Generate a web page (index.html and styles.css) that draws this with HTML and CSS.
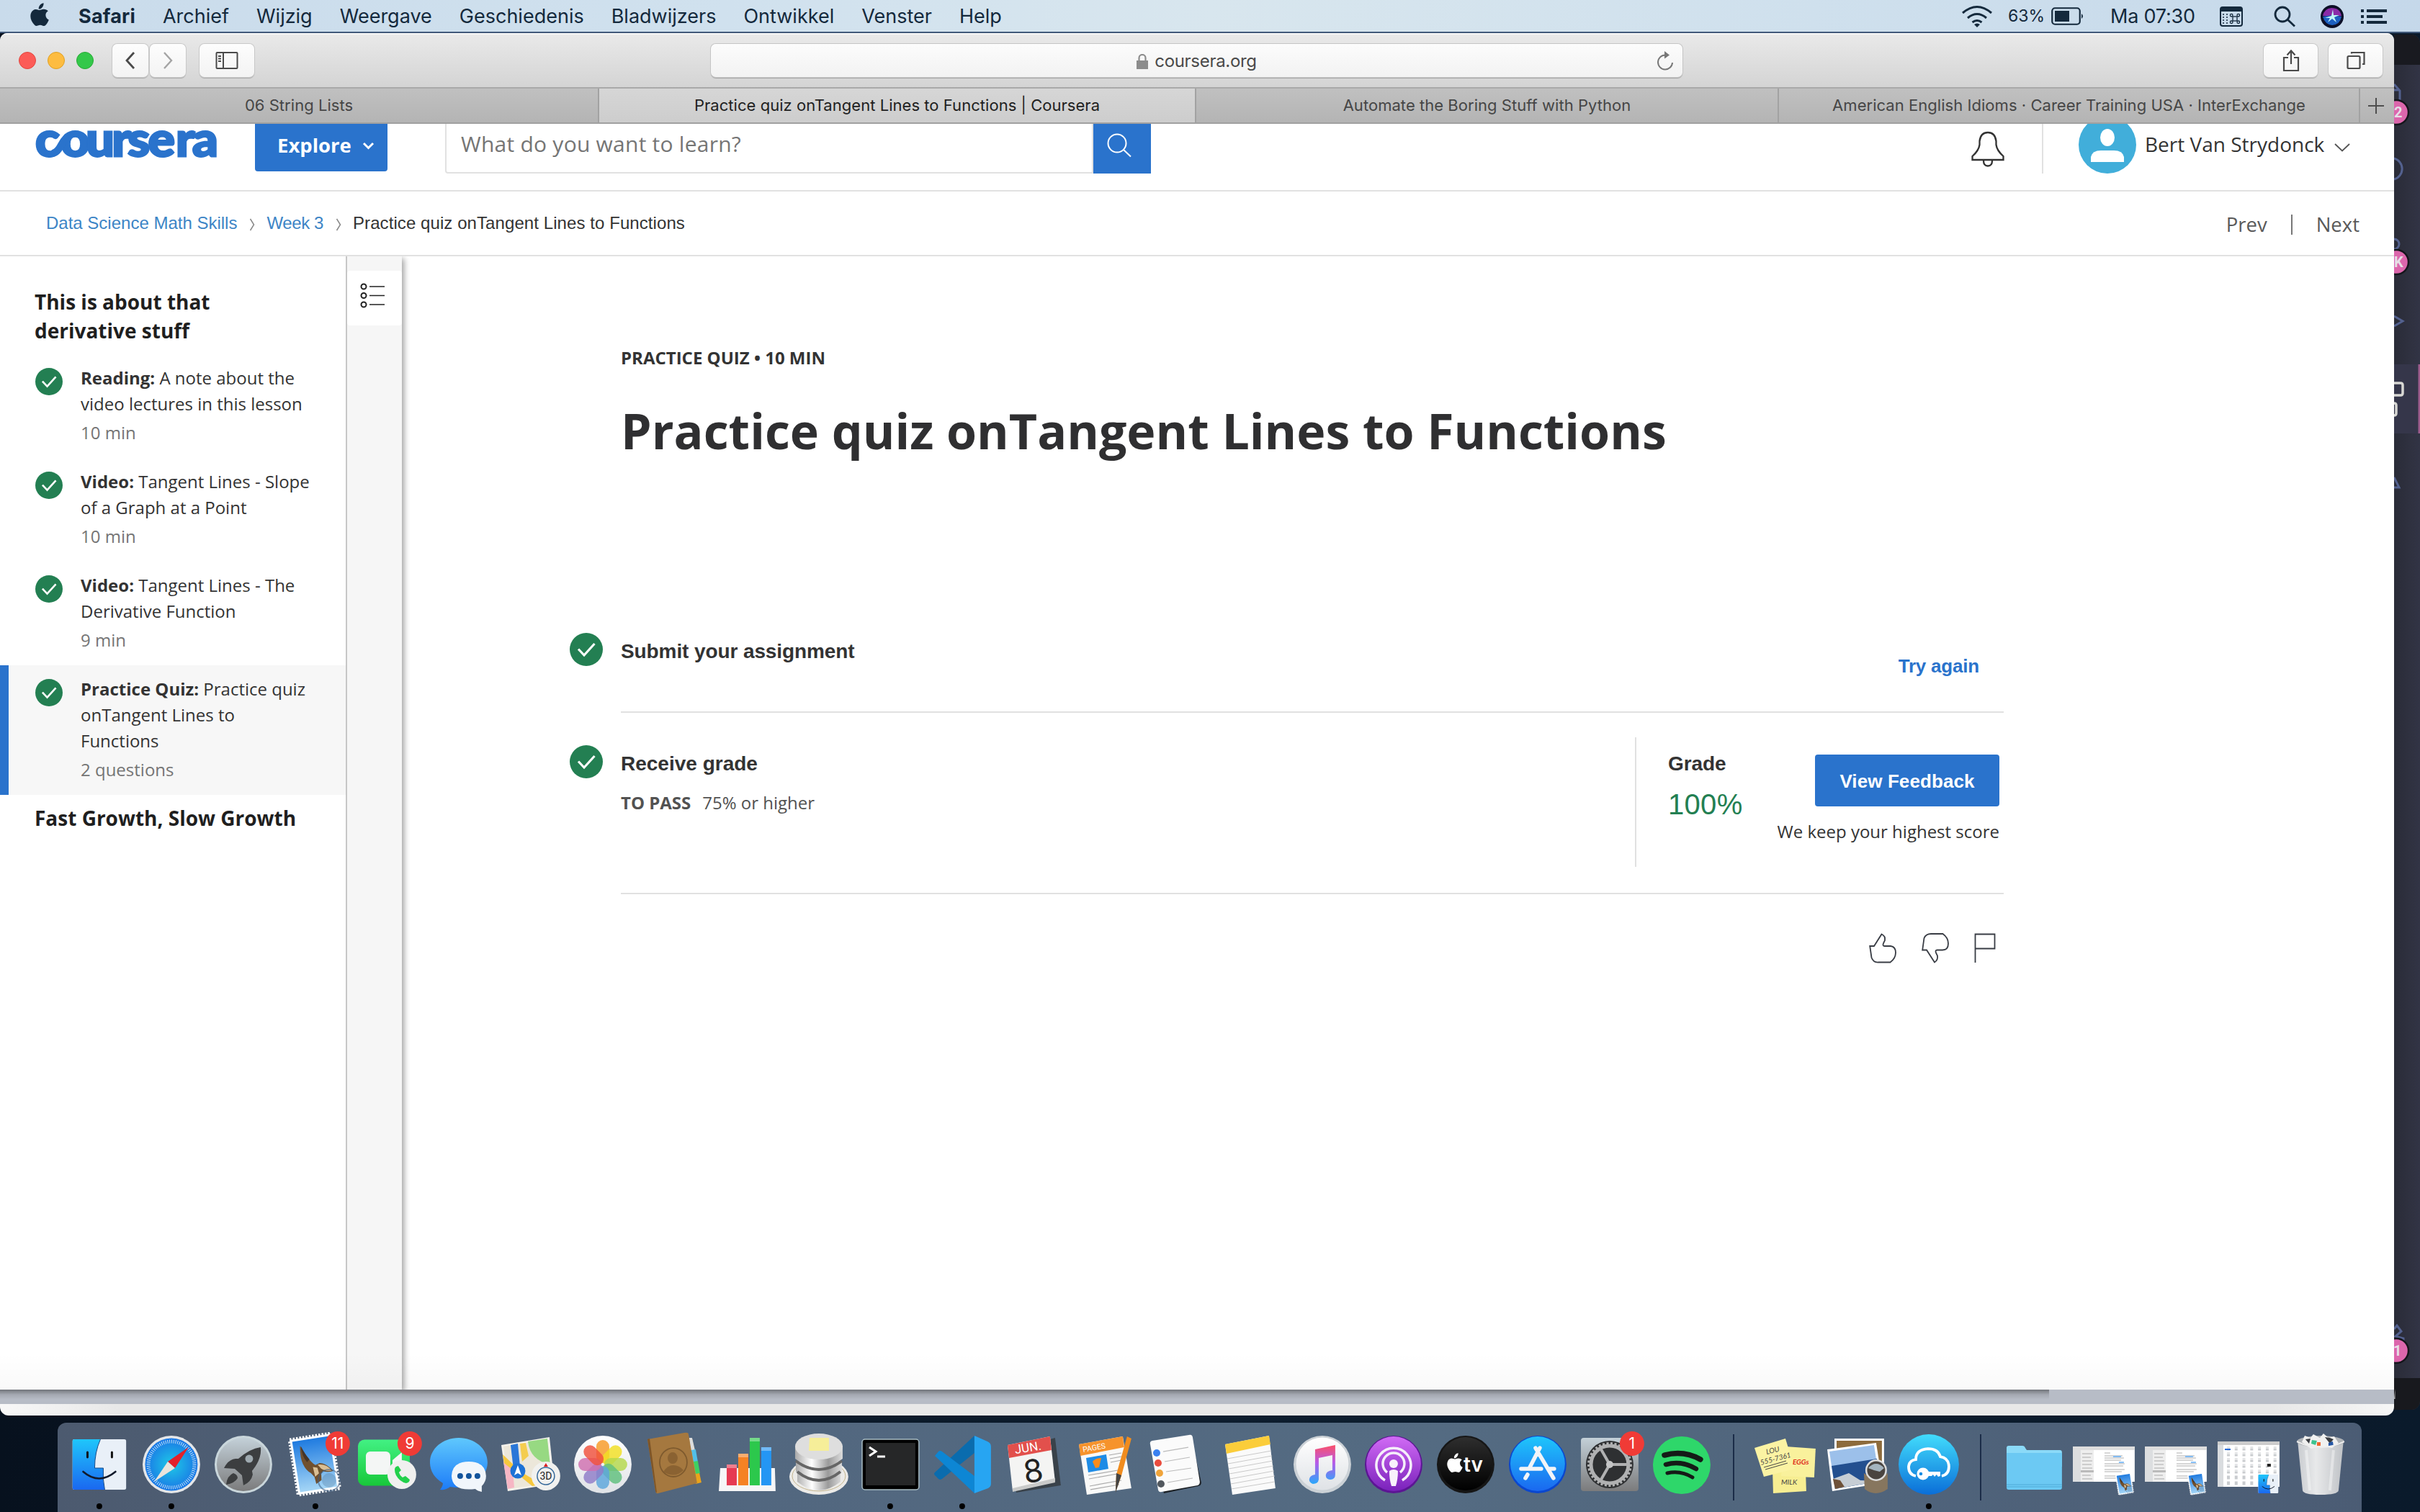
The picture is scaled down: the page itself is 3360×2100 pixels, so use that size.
FILE: index.html
```html
<!DOCTYPE html>
<html lang="nl">
<head>
<meta charset="utf-8">
<title>Practice quiz onTangent Lines to Functions | Coursera</title>
<link rel="stylesheet" href="styles.css">
</head>
<body>
<svg class="defs" aria-hidden="true">
  <defs>
    <symbol id="check" viewBox="0 0 46 46"><circle cx="23" cy="23" r="23" fill="#237f52"/><path d="M12 22.500l8 8.500L34.500 15" fill="none" stroke="#fff" stroke-width="3.200"/></symbol>
    <symbol id="apple" viewBox="0 0 26 32"><path d="M18.500.3c.3 2.500-.8 4.600-2.100 6.100-1.300 1.500-3.100 2.300-4.700 2.200-.3-2.400.9-4.500 2.100-5.900C15 1.300 17 .4 18.500.3zM24.800 11.300c-2.500 1.600-3.500 3.600-3.400 6 .1 2.900 1.800 5.200 4.400 6.200-1 2.900-2.500 5.300-4.300 7.300-1.500 1.600-3 1.300-4.700.6-2.100-.9-4-.9-6.200.1-1.700.7-3.200.7-4.600-.8C.6 25.200-1.200 18 1.600 12.900c1.300-2.400 3.500-3.900 5.900-4 2-.1 3.900 1.200 5.400 1.200 1.300 0 3.400-1.500 6-1.300 2.300.1 4.500 1 5.900 2.500z"/></symbol>
    <symbol id="chev" viewBox="0 0 8 20"><path d="M1.500 2l5 8-5 8" fill="none" stroke="#888" stroke-width="1.500"/></symbol>
    <linearGradient id="gBlue" x1="0" y1="0" x2="0" y2="1"><stop offset="0" stop-color="#1fc6fb"/><stop offset="1" stop-color="#1a68f0"/></linearGradient>
    <linearGradient id="gMsg" x1="0" y1="0" x2="0" y2="1"><stop offset="0" stop-color="#5fc8fd"/><stop offset="1" stop-color="#1d7cf8"/></linearGradient>
    <linearGradient id="gGreen" x1="0" y1="0" x2="0" y2="1"><stop offset="0" stop-color="#42f183"/><stop offset="1" stop-color="#18c83a"/></linearGradient>
    <linearGradient id="gSilver" x1="0" y1="0" x2="0" y2="1"><stop offset="0" stop-color="#c3d0d8"/><stop offset="1" stop-color="#7b7b7c"/></linearGradient>
    <linearGradient id="gWhite" x1="0" y1="0" x2="0" y2="1"><stop offset="0" stop-color="#fff"/><stop offset="1" stop-color="#dfe2e6"/></linearGradient>
    <linearGradient id="gPurple" x1="0" y1="0" x2="0" y2="1"><stop offset="0" stop-color="#d16bf5"/><stop offset="1" stop-color="#7a22bb"/></linearGradient>
    <linearGradient id="gNote" x1="0" y1="0" x2="0" y2="1"><stop offset="0" stop-color="#fb4f68"/><stop offset=".45" stop-color="#b75ae8"/><stop offset="1" stop-color="#28a8fb"/></linearGradient>
    <linearGradient id="gBlack" x1="0" y1="0" x2="0" y2="1"><stop offset="0" stop-color="#2e2e2e"/><stop offset="1" stop-color="#000"/></linearGradient>
    <linearGradient id="gKey" x1="0" y1="0" x2="0" y2="1"><stop offset="0" stop-color="#42dcfc"/><stop offset="1" stop-color="#0a6ed8"/></linearGradient>
    <linearGradient id="gSky" x1="0" y1="0" x2="0" y2="1"><stop offset="0" stop-color="#1f7be0"/><stop offset="1" stop-color="#a5d6f6"/></linearGradient>
    <linearGradient id="gSteel" x1="0" y1="0" x2="1" y2="0"><stop offset="0" stop-color="#aaa"/><stop offset=".35" stop-color="#fff"/><stop offset=".7" stop-color="#9a9a9a"/><stop offset="1" stop-color="#ddd"/></linearGradient>
    <linearGradient id="gTrash" x1="0" y1="0" x2="1" y2="0"><stop offset="0" stop-color="#c9ccd0"/><stop offset=".4" stop-color="#e8e9ea"/><stop offset="1" stop-color="#bfc2c6"/></linearGradient>
    <radialGradient id="gSafari"><stop offset="0" stop-color="#1ec9e6"/><stop offset="1" stop-color="#1a78e6"/></radialGradient>
    <symbol id="finder" viewBox="0 0 75 70"><rect width="75" height="70" rx="3" fill="#e9f0f8"/><path d="M3 0h36q-8 18-8 40h12q-1 16 2 30H3q-3 0-3-3V3q0-3 3-3z" fill="url(#gBlue)"/><path d="M39 0q-8 18-8 40h12q-1 16 2 30" fill="none" stroke="#174a86" stroke-width="1"/><path d="M21 18v7M55 18v7" stroke="#111" stroke-width="3" stroke-linecap="round"/><path d="M15 45q22 19 45 0" fill="none" stroke="#111a2c" stroke-width="2.600" stroke-linecap="round"/></symbol>
    <symbol id="stamp" viewBox="0 0 80 90"><g transform="rotate(-9 40 45)"><rect x="11" y="6" width="58" height="77" fill="#fff" stroke="#fff" stroke-width="5" stroke-dasharray="2.500 2"/><rect x="14" y="9" width="52" height="71" fill="url(#gSky)"/><path d="M24 16q4 12 9 20t8 10l6-2q10 2 17 14-8 1-14-2l-3 3-1 9-8 4-1-10-4-6q-6-4-9-14t0-26z" fill="#70502f"/><path d="M25 17q4 12 9 20l-4 3q-6-9-5-23z" fill="#463527"/><path d="M44 46q12 0 18 11-9 0-14-5zM37 48l6 2 1 8-6 4z" fill="#d9bf95"/></g><circle cx="60" cy="67" r="15" fill="none" stroke="#3d5b80" stroke-opacity=".55" stroke-width="2"/><circle cx="60" cy="67" r="10" fill="#3d5b80" fill-opacity=".25"/></symbol>
    <symbol id="mailwin" viewBox="0 0 88 68"><rect width="86" height="49" fill="#fff"/><path d="M0 0h86v5H0z" fill="#ddd"/><path d="M0 5h11v44H0z" fill="#dcdee0"/><path d="M11 5h18v44H11z" fill="#eee"/><path d="M13 10h14M13 15h12M13 20h14M13 25h13M13 30h14M13 40h12M13 45h14M44 9h8M44 13h25M44 16h27M44 19h23M44 24h28M44 27h26M44 32h28M44 35h24M44 41h27M44 44h26" stroke="#999" stroke-width=".8"/><path d="M11 33h18v3H11z" fill="#bbb"/><path d="M56 14h11M64 22h7" stroke="#62adf5" stroke-width="1.500"/><use href="#stamp" x="57" y="36" width="30" height="32"/></symbol>
  </defs>
</svg>

<header class="menubar">
  <svg class="apple" width="26" height="32"><use href="#apple"/></svg>
  <nav class="menus">
    <span class="app">Safari</span><span>Archief</span><span>Wijzig</span><span>Weergave</span><span>Geschiedenis</span><span>Bladwijzers</span><span>Ontwikkel</span><span>Venster</span><span>Help</span>
  </nav>
  <div class="status">
    <svg class="wifi" width="44" height="32" viewBox="0 0 44 32" fill="none" stroke="#14293c" stroke-width="3"><path d="M2 11q20-17 40 0M9 18q13-11 26 0M15.500 24q6.500-5 13 0"/><path d="M22 31l-4-4q4-3 8 0z" fill="#14293c" stroke="none"/></svg>
    <span class="percent">63%</span>
    <svg class="battery" width="46" height="26" viewBox="0 0 46 26"><rect x="1.250" y="1.250" width="38.500" height="22.500" rx="4" fill="none" stroke="#14293c" stroke-width="2.200"/><rect x="5" y="5" width="20" height="15" fill="#14293c"/><path d="M42 9q4 3.500 0 7z" fill="#14293c"/></svg>
    <span class="clock">Ma 07:30</span>
    <svg class="kbd" width="32" height="28" viewBox="0 0 32 28"><rect x="1" y="1" width="30" height="26" rx="3" fill="none" stroke="#14293c" stroke-width="2"/><path d="M1 1h30v6H1z" fill="#14293c"/><path d="M4 11h2M4 15h2M4 19h2M4 23h2M9 11h2M9 15h2M9 19h2M9 23h2" stroke="#14293c" stroke-width="1.500"/><g fill="none" stroke="#14293c" stroke-width="1.300"><rect x="18" y="14" width="6" height="6"/><circle cx="16.200" cy="12.200" r="1.800"/><circle cx="25.800" cy="12.200" r="1.800"/><circle cx="16.200" cy="21.800" r="1.800"/><circle cx="25.800" cy="21.800" r="1.800"/></g></svg>
    <svg class="find" width="32" height="30" viewBox="0 0 32 30" fill="none" stroke="#14293c" stroke-width="2.800"><circle cx="12" cy="12" r="10"/><path d="M19 19l10 9.500"/></svg>
    <svg class="siri" width="32" height="32" viewBox="0 0 32 32"><circle cx="16" cy="16" r="16" fill="#0d1028"/><path d="M3 15q2-10 12-11 12 0 14 11l-13 1z" fill="#8a2ba8"/><path d="M3 16q3 11 13 12 11-1 13-12l-12-2z" fill="#1d5fc0"/><path d="M6 18l9-3 2-9 1 8 8 0-7 3 3 7-6-5-6 5 3-6z" fill="#bff4f5"/></svg>
    <svg class="notif" width="36" height="20" viewBox="0 0 36 20" stroke="#14293c" stroke-width="3.800"><path d="M0 2h4M8 2h28M0 10h4M8 10h22M0 18h4M8 18h28"/></svg>
  </div>
</header>

<main class="desktop">
  <section class="editor">
    <svg width="36" height="1910" viewBox="0 0 36 1910" fill="none">
      <path d="M0 0h36v42H0z" fill="#191a20"/><path d="M0 458h36v96H0z" fill="#35364a"/><path d="M33.500 458h2.500v96h-2.500z" fill="#9c5b8c"/>
      <path d="M0 1866h36v44H0z" fill="#18191e"/>
      <g stroke="#53618f" stroke-width="3"><path d="M0 69l8 9v14M0 77h8"/><path d="M0 172a15 15 0 0 1 0 29"/><path d="M0 284a6 6 0 0 1 0 14"/><path d="M0 391l12 7-12 7"/><path d="M0 615l7 14H0"/><path d="M0 1798l4-5 6 8-8 7 11 3v6"/></g>
      <g stroke="#d8d8d4" stroke-width="3.500"><path d="M0 484h9q3 0 3 3v11q0 3-3 3H0M0 512q3 0 3 3v11q0 3-3 3"/></g>
      <g fill="#dc66ac" stroke="#15161c" stroke-width="2.500"><circle cx="3" cy="108" r="17"/><circle cx="3" cy="316" r="17"/><circle cx="3" cy="1828" r="17"/></g>
      <g class="pips" fill="#e6dfe6"><text x="0" y="115">2</text><text x="0" y="323">K</text><text x="-1" y="1835">1</text></g>
      <path d="M0 1895h1.500v-14z" fill="#bbb"/>
    </svg>
  </section>

  <section class="backwin"><div class="band"></div></section>

  <section class="safari">
    <div class="toolbar">
      <div class="lights"><i class="red"></i><i class="amber"></i><i class="green"></i></div>
      <div class="navbtns">
        <button><svg width="14" height="24" viewBox="0 0 14 24" fill="none" stroke="#4a4a4a" stroke-width="2.800"><path d="M12 1L2 12l10 11"/></svg></button>
        <button><svg width="14" height="24" viewBox="0 0 14 24" fill="none" stroke="#a4a4a4" stroke-width="2.400"><path d="M2 1l10 11L2 23"/></svg></button>
      </div>
      <button class="side"><svg width="32" height="24" viewBox="0 0 32 24" fill="none" stroke="#4a4a4a" stroke-width="2"><rect x="1.500" y="1" width="29" height="22" rx="1"/><path d="M11 1v22M4 6h4M4 9.500h4M4 13h4"/></svg></button>
      <div class="address">
        <div class="host"><svg width="16" height="21" viewBox="0 0 16 21"><path d="M0 9h16v12H0z" fill="#8c8c8c"/><path d="M3.500 9V5.500a4.500 4.500 0 0 1 9 0V9" fill="none" stroke="#8c8c8c" stroke-width="2.200"/></svg><span>coursera.org</span></div>
        <svg class="reload" width="24" height="28" viewBox="0 0 24 28" fill="none" stroke="#777" stroke-width="2"><path d="M12 6.500A10 10 0 1 0 22 17"/><path d="M11 1l7 5.500-7 5z" fill="#777" stroke="none"/></svg>
      </div>
      <div class="actions">
        <button><svg width="24" height="32" viewBox="0 0 24 32" fill="none" stroke="#4a4a4a" stroke-width="2.200"><path d="M8 12H2v18h20V12h-6M12 21V3M6.500 8.500L12 2.500l5.500 6"/></svg></button>
        <button><svg width="26" height="26" viewBox="0 0 26 26" fill="none" stroke="#4a4a4a" stroke-width="2.200"><rect x="1.500" y="7" width="17" height="17" rx="1.500"/><path d="M7 3.500V2h17.500v16h-2.500"/></svg></button>
      </div>
    </div>
    <div class="tabs">
      <div class="tab t1"><span>06 String Lists</span></div><div class="tab active"><span>Practice quiz onTangent Lines to Functions | Coursera</span></div><div class="tab t3"><span>Automate the Boring Stuff with Python</span></div><div class="tab t4"><span>American English Idioms · Career Training USA · InterExchange</span></div><div class="tab plus"><svg width="22" height="22" viewBox="0 0 22 22" stroke="#4e4e4e" stroke-width="2"><path d="M11 0v22M0 11h22"/></svg></div>
    </div>

    <div class="masthead">
      <svg class="logo" width="262" height="60" viewBox="44 172 262 60"><text y="217" x="46.200 79.500 112.500 146.500 167.200 193.800 230.300 252" transform="scale(1.060 1)">coursera</text><path d="M73 213Q80 211 84 203T94 189" fill="none" stroke="#2a73cc" stroke-width="10"/></svg>
      <div class="explore"><span>Explore</span><svg width="17" height="11" viewBox="0 0 17 11" fill="none" stroke="#fff" stroke-width="3"><path d="M2 2l6.500 6.500L15 2"/></svg></div>
      <div class="search"><span>What do you want to learn?</span></div>
      <div class="go"><svg width="34" height="34" viewBox="0 0 34 34" fill="none" stroke="#fff" stroke-width="2"><circle cx="14" cy="14" r="12.500"/><path d="M23 23l10 9.500"/></svg></div>
      <svg class="bell" width="46" height="50" viewBox="0 0 46 50" fill="none" stroke="#333" stroke-width="2.300"><path d="M1.500 40V35q9-8 10-16V14Q13 2 23 2t11.500 12v5q1 8 10 16v5zM17 41q0 7.500 6 7.500t6-7.500"/></svg>
      <div class="rule"></div>
      <svg class="avatar" width="80" height="69" viewBox="0 11 80 69"><circle cx="40" cy="40" r="40" fill="#41aeda"/><ellipse cx="40" cy="30" rx="10" ry="12" fill="#fff"/><path d="M17 64V57q2-9 14-9h18q12 0 14 9v7z" fill="#fff"/></svg>
      <span class="user">Bert Van Strydonck</span>
      <svg class="caret" width="22" height="12" viewBox="0 0 22 12" fill="none" stroke="#555" stroke-width="1.800"><path d="M1 1l10 9.500L21 1"/></svg>
    </div>

    <div class="crumbs">
      <a>Data Science Math Skills</a><svg width="8" height="20"><use href="#chev"/></svg><a class="week">Week 3</a><svg width="8" height="20"><use href="#chev"/></svg><span class="here">Practice quiz onTangent Lines to Functions</span>
      <div class="pager"><span>Prev</span><i></i><span>Next</span></div>
    </div>

    <div class="content">
      <aside class="outline">
        <h2>This is about that<br>derivative stuff</h2>
        <div class="item"><svg width="38" height="38"><use href="#check"/></svg><div><p><b>Reading:</b> A note about the<br>video lectures in this lesson</p><small>10 min</small></div></div>
        <div class="item"><svg width="38" height="38"><use href="#check"/></svg><div><p><b>Video:</b> Tangent Lines - Slope<br>of a Graph at a Point</p><small>10 min</small></div></div>
        <div class="item"><svg width="38" height="38"><use href="#check"/></svg><div><p><b>Video:</b> Tangent Lines - The<br>Derivative Function</p><small>9 min</small></div></div>
        <div class="item current"><svg width="38" height="38"><use href="#check"/></svg><div><p><b>Practice Quiz:</b> Practice quiz<br>onTangent Lines to<br>Functions</p><small>2 questions</small></div></div>
        <h3>Fast Growth, Slow Growth</h3>
      </aside>
      <div class="rail"><div class="railbtn"><svg width="36" height="36" viewBox="0 0 36 36" fill="none" stroke="#222" stroke-width="2"><circle cx="5" cy="5" r="3.500"/><circle cx="5" cy="17.500" r="3.500"/><circle cx="5" cy="30" r="3.500"/><path d="M13 5h21M13 17.500h21M13 30h21" stroke-width="1.600"/></svg></div></div>
      <article class="quiz">
        <p class="kicker">PRACTICE QUIZ • 10 MIN</p>
        <h1>Practice quiz onTangent Lines to Functions</h1>
        <div class="step s1"><svg width="46" height="46"><use href="#check"/></svg><div class="stepbody"><strong>Submit your assignment</strong><a class="again">Try again</a></div></div>
        <div class="step s2"><svg width="46" height="46"><use href="#check"/></svg><div class="stepbody">
          <div class="lead"><strong>Receive grade</strong><p><b>TO PASS</b><span>75% or higher</span></p></div>
          <div class="grade"><div class="score"><strong>Grade</strong><em>100%</em></div><div class="feedback"><button>View Feedback</button><span>We keep your highest score</span></div></div>
        </div></div>
        <div class="react">
          <svg width="38" height="42" viewBox="0 0 38 42" fill="none" stroke="#383c44" stroke-width="1.800"><path d="M1.200 18H7L17.500 1.500Q23 4 22 10l-2 4q-1.500 4 1.500 4H30q7 1 7 9 0 8-7.500 13.500H13Q6 41 3.500 34z"/></svg>
          <svg width="38" height="42" viewBox="0 0 38 42" fill="none" stroke="#383c44" stroke-width="1.800"><path d="M1.200 23.500H7L18 40.500q5-3 4-9l-2-4q-1.500-4 1.500-4H29q8 0 8-9 0-8-7.500-13.500H13Q6 1 3.500 7z"/></svg>
          <svg width="30" height="42" viewBox="0 0 30 42" fill="none" stroke="#383c44" stroke-width="1.800"><path d="M1.500 41V1.500h27v20h-27"/></svg>
        </div>
      </article>
    </div>
    <div class="fade"></div>
  </section>
  <div class="edge"></div>

  <footer class="dock">
    <svg class="ico" viewBox="0 0 100 116"><use href="#finder" x="12.500" y="15" width="75" height="70"/><circle class="dot" cx="50" cy="108" r="4"/></svg>
    <svg class="ico" viewBox="0 0 100 116"><circle cx="50" cy="50" r="40" fill="#e4e6e8"/><circle cx="50" cy="50" r="36.500" fill="url(#gSafari)"/><circle cx="50" cy="50" r="32" fill="none" stroke="#fff" stroke-opacity=".8" stroke-width="5" stroke-dasharray=".9 1.890"/><path d="M74 26L55 55l-10-9z" fill="#e3202a"/><path d="M26 74l19-28 10 9z" fill="#e9e4dc"/><circle class="dot" cx="50" cy="108" r="4"/></svg>
    <svg class="ico" viewBox="0 0 100 116"><circle cx="50" cy="50" r="40" fill="#c9d6db"/><circle cx="50" cy="50" r="37" fill="url(#gSilver)"/><path d="M74 26q2 16-12 33l1 5q-2 10-13 15l-2-14-10-9-15-1q6-12 16-13l4 0q16-14 31-16z" fill="#3c3e40"/><circle cx="58" cy="42" r="5.500" fill="#9faab0"/><path d="M36 62q6 2 6 7-4 7-16 9 1-12 10-16z" fill="#3c3e40"/></svg>
    <svg class="ico" viewBox="0 0 100 116"><use href="#stamp" x="9" y="5" width="80" height="90"/><circle cx="81" cy="21" r="17" fill="#f03b36"/><text class="bdg" x="81" y="28">11</text><circle class="dot" cx="50" cy="108" r="4"/></svg>
    <svg class="ico" viewBox="0 0 100 116"><rect x="10" y="15.500" width="72" height="64" rx="9" fill="url(#gGreen)"/><rect x="21" y="32" width="34" height="32" rx="6" fill="#f4f6f5"/><path d="M58 44l13-11v30L58 52z" fill="#f4f6f5"/><circle cx="71" cy="64" r="20" fill="#f0f0ef"/><path d="M63 53q-4 3 0 12 5 9 14 11 5-1 5-5l-6-5-4 2q-4-3-5-7l3-3-4-6z" fill="#23d04b"/><circle cx="82" cy="21" r="17" fill="#f03b36"/><text class="bdg" x="82" y="28">9</text></svg>
    <svg class="ico" viewBox="0 0 100 116"><path d="M50 13c22 0 40 15 40 34S72 82 50 82q-6 0-12-1-6 5-14 4 4-5 4-9Q10 65 10 47c0-19 18-34 40-34z" fill="url(#gMsg)"/><path d="M64 46q23 0 24 20 0 8-6 14l0 8q-6-1-9-4-32 4-33-18 1-20 24-20z" fill="#f1f6fb"/><circle cx="52" cy="66" r="4" fill="#12549c"/><circle cx="64" cy="66" r="4" fill="#12549c"/><circle cx="76" cy="66" r="4" fill="#12549c"/></svg>
    <svg class="ico" viewBox="0 0 100 116"><path d="M9 23l67-11 7 65-65 10z" fill="#f4f2ec"/><path d="M12 25l61-10 6 60-58 9z" fill="#ece7da"/><path d="M46 18l27-4 4 36q-28-6-31-32z" fill="#97d982"/><path d="M12 46l13 9 2 27-9 2z" fill="#f6b6c4"/><path d="M11 36l25 24 30 18-14 2-39-32z" fill="#f6c83e"/><path d="M22 23l10-2 4 42-9 2z" fill="#2a77d8"/><path d="M35 21l8-1 4 18-9 8z" fill="#f4cd4f"/><circle cx="32" cy="59" r="10.500" fill="#1d72d6"/><path d="M32 51l5 14-5-3-5 3z" fill="#fff"/><circle cx="71" cy="66" r="20" fill="#f1f1ef"/><circle cx="71" cy="66" r="12" fill="none" stroke="#35689a" stroke-width="1.500"/><path d="M71 48l3 5h-6z" fill="#d22"/><text class="t3d" x="71" y="71">3D</text></svg>
    <svg class="ico" viewBox="0 0 100 116"><circle cx="50" cy="50" r="40" fill="url(#gWhite)"/><g fill-opacity=".82"><rect x="41" y="16" width="18" height="32" rx="9" fill="#f89a24"/><rect x="41" y="16" width="18" height="32" rx="9" fill="#f2df22" transform="rotate(45 50 50)"/><rect x="41" y="16" width="18" height="32" rx="9" fill="#b4d84b" transform="rotate(90 50 50)"/><rect x="41" y="16" width="18" height="32" rx="9" fill="#5fbf7d" transform="rotate(135 50 50)"/><rect x="41" y="16" width="18" height="32" rx="9" fill="#5ba6dc" transform="rotate(180 50 50)"/><rect x="41" y="16" width="18" height="32" rx="9" fill="#8f7cc8" transform="rotate(225 50 50)"/><rect x="41" y="16" width="18" height="32" rx="9" fill="#cf6fb0" transform="rotate(270 50 50)"/><rect x="41" y="16" width="18" height="32" rx="9" fill="#f0503c" transform="rotate(315 50 50)"/></g></svg>
    <svg class="ico" viewBox="0 0 100 116"><path d="M70 15l4-1 13 61-8 2z" fill="#eaa41c"/><path d="M70 13l4 0 4 17-6 1z" fill="#ddd"/><path d="M73 30l6-1 3 17-6 1z" fill="#52bfe8"/><path d="M76 46l6-1 3 17-6 1z" fill="#3fd062"/><path d="M12 15l51-9q6-1 6 2l12 68-54 14q-3 1-4-3z" fill="#a5783f"/><path d="M12 15l3-1 10 75q-2 0-2-3z" fill="#7e5527"/><ellipse cx="48" cy="47" rx="19" ry="20" fill="none" stroke="#7e5a2e" stroke-width="1.800"/><ellipse cx="47" cy="41" rx="7" ry="8" fill="#8a6232"/><path d="M34 60q6-9 14-9t14 7q-12 12-28 2z" fill="#8a6232"/></svg>
    <svg class="ico" viewBox="0 0 100 116"><path d="M13 55h76l1 32H11z" fill="#f6f6f7"/><rect x="22" y="50" width="14" height="29" fill="#e63a52"/><rect x="38" y="35" width="14" height="44" fill="#f58224"/><rect x="54" y="13" width="14" height="66" fill="#2cc84c"/><rect x="70" y="26" width="14" height="53" fill="#2496f4"/><path d="M22 50h14v5H22zM38 35h14v5H38zM54 13h14v5H54zM70 26h14v5H70z" fill="#fff" fill-opacity=".35"/></svg>
    <svg class="ico" viewBox="0 0 100 116"><ellipse cx="50" cy="67" rx="41" ry="25" fill="#ecebe8"/><ellipse cx="50" cy="66" rx="37" ry="21" fill="none" stroke="#c4b58e"/><path d="M20 62v12q30 24 60 0V62zM18 46v14q32 24 64 0V46z" fill="url(#gSteel)"/><path d="M20 60q30 24 60 0M18 45q32 24 64 0" stroke="#666" stroke-width="4" fill="none"/><path d="M17 24v18q33 25 66 0V24z" fill="url(#gSteel)"/><ellipse cx="50" cy="25" rx="33" ry="18" fill="#dedede"/><path d="M37 13h27v18H36z" fill="#f6ee99"/></svg>
    <svg class="ico" viewBox="0 0 100 116"><rect x="11" y="15" width="79" height="70" rx="4" fill="#000" stroke="#a9bdc4" stroke-width="1.500"/><rect x="16" y="20" width="69" height="59" fill="#262728"/><path d="M21 26l9 6-9 6M32 39h11" fill="none" stroke="#fff" stroke-width="3"/><circle class="dot" cx="50" cy="108" r="4"/></svg>
    <svg class="ico" viewBox="0 0 100 116"><path d="M67 10v24L22 70q-3 2-5 0l-5-5q-2-2 0-4z" fill="#0a6cae"/><path d="M12 38l5-6q2-2 5 0l45 34v24z" fill="#0d86d4"/><path d="M67 10l18 8q5 2 5 7v52q0 4-4 6l-19 7z" fill="#27a5f2"/><circle class="dot" cx="50" cy="108" r="4"/></svg>
    <svg class="ico" viewBox="0 0 100 116"><path d="M17 30l62-17 8 66-62 10z" fill="#39424a"/><path d="M13 23l59-12 7 62-59 14z" fill="#f4f4f3"/><path d="M13 23l59-12 2 19-59 11z" fill="#e2504c"/><path d="M20 83l59-14v6L20 88z" fill="#c9cac9"/><g transform="rotate(-9 45 50)"><text class="jun" x="45" y="32">JUN.</text><text class="eight" x="47" y="75">8</text></g></svg>
    <svg class="ico" viewBox="0 0 100 116"><path d="M12 22l61-11 12 72-62 9z" fill="#f9f9f8"/><path d="M12 22l61-11 2 15-61 12z" fill="#f6932c"/><path d="M22 41l28-5 3 20-28 5z" fill="#1e8ce6"/><path d="M31 46q4-5 12-5l-3 13-5 1z" fill="#f98c1b"/><path d="M54 37l17-3M55 42l16-3M56 47l15-3M25 65l47-8M26 70l45-8M27 80l44-8M28 85l40-7" stroke="#aaa" stroke-width="1.200"/><path d="M79 11l6 3-14 52-8 22 1-24z" fill="#f08c1e"/><path d="M64 62l7 3-8 24z" fill="#444"/><text class="pg" x="18" y="33" transform="rotate(-10 18 33)">PAGES</text></svg>
    <svg class="ico" viewBox="0 0 100 116"><path d="M15 25l54-8 13 58q0 4-4 5l-48 10z" fill="#1c2126"/><path d="M11 22q-1-4 3-5l51-8q4-1 5 3l10 62q0 4-3 5l-50 9q-4 1-5-3z" fill="#fbfbfb"/><circle cx="20" cy="34" r="5" fill="#3a80f0"/><circle cx="22" cy="48" r="5" fill="#ea4c3e"/><circle cx="24" cy="62" r="5" fill="#f0a43a"/><circle cx="26" cy="77" r="5" fill="#52585e"/><path d="M29 32l35-6M31 46l35-6M33 60l35-5M35 75l35-6" stroke="#bbb" stroke-width="1.200"/></svg>
    <svg class="ico" viewBox="0 0 100 116"><path d="M15 22l61-12 9 73-60 9z" fill="#fafafa"/><path d="M15 22l61-12 2 12-61 13z" fill="#fbcd3a"/><path d="M18 42l61-11M19 49l61-11M20 56l61-11M21 63l61-11M22 70l61-11M23 77l61-11M24 84l60-10" stroke="#c9c9c9"/></svg>
    <svg class="ico" viewBox="0 0 100 116"><circle cx="50" cy="50" r="40" fill="#cbd1d6"/><circle cx="50" cy="49" r="36.500" fill="url(#gWhite)"/><path d="M40 29l28-6v41q0 7-7 7-7-1-6-7 1-5 9-6V37l-19 4v30q-1 6-8 6-6-2-5-7 1-5 8-6z" fill="url(#gNote)"/></svg>
    <svg class="ico" viewBox="0 0 100 116"><circle cx="50" cy="50" r="40" fill="#5c1594"/><circle cx="50" cy="49" r="38" fill="url(#gPurple)"/><g fill="none" stroke="#f5eefa" stroke-width="3.500"><path d="M38 72a24 24 0 1 1 24 0M41 61a15 15 0 1 1 18 0"/></g><circle cx="50" cy="49" r="6" fill="#f8f2fb"/><path d="M44 59q6-4 12 0 0 12-3 21h-6q-3-9-3-21z" fill="#f8f2fb"/></svg>
    <svg class="ico" viewBox="0 0 100 116"><circle cx="50" cy="50" r="40" fill="#161616"/><circle cx="50" cy="49" r="37" fill="url(#gBlack)"/><use href="#apple" x="24" y="34" width="22" height="27" fill="#fff"/><text class="tv" x="47" y="60">tv</text></svg>
    <svg class="ico" viewBox="0 0 100 116"><circle cx="50" cy="50" r="40" fill="#0a47cf"/><circle cx="50" cy="49" r="38" fill="url(#gBlue)"/><g stroke="#f2f4f8" stroke-width="5.500" stroke-linecap="round"><path d="M53 27L38 56M36 64l-3 5M47 27l25 42M27 56h28M65 56h8"/></g></svg>
    <svg class="ico" viewBox="0 0 100 116"><rect x="10" y="13" width="80" height="74" rx="4" fill="url(#gSilver)"/><circle cx="50" cy="50" r="33" fill="#2e3032"/><circle cx="50" cy="50" r="26" fill="none" stroke="#b0b1b2" stroke-width="5"/><circle cx="50" cy="50" r="29" fill="none" stroke="#b0b1b2" stroke-width="4" stroke-dasharray="3 2.500"/><g stroke="#b0b1b2" stroke-width="4"><path d="M50 50h24M50 50L38 29M50 50L38 71"/></g><circle cx="50" cy="50" r="5" fill="#c4c5c6"/><circle cx="81" cy="21" r="17" fill="#f03b36"/><text class="bdg" x="81" y="28">1</text></svg>
    <svg class="ico" viewBox="0 0 100 116"><circle cx="50" cy="51" r="40" fill="#2ed76a"/><g fill="none" stroke="#151a17" stroke-linecap="round"><path d="M26 37q27-7 50 6" stroke-width="7.500"/><path d="M28 50q22-6 42 6" stroke-width="6.500"/><path d="M30 62q19-4 35 6" stroke-width="5"/></g></svg>
    <i class="sep"></i>
    <svg class="ico" viewBox="0 0 100 116"><path d="M32 54h46l1 33-46 3z" fill="#f7ee92"/><path d="M50 25l42 3-2 40-46-2z" fill="#f9f19c"/><path d="M7 27l43-13 13 42-43 11z" fill="#fbf3a3"/><g class="hand"><text x="24" y="36" transform="rotate(-14 24 36)">LOU</text><text x="16" y="51" transform="rotate(-15 16 51)">555-7361</text><text class="r" x="60" y="50">EGGs</text><text x="44" y="78">MILK</text></g><path d="M20 54l31-9M22 57l31-9" stroke="#444"/></svg>
    <svg class="ico" viewBox="0 0 100 116"><path d="M18 14h69v56H18z" fill="#fff"/><path d="M21 17h63v50H21z" fill="#8d6b3c"/><path d="M8 29l68-9 9 56-70 11z" fill="#fff"/><path d="M11 32l62-9 8 50-62 11z" fill="#9cc0ea"/><path d="M14 52l63-10 4 31-62 11z" fill="#234f8f"/><path d="M16 70l22-8 16 10 26 1-61 11z" fill="#c6cdd4"/><path d="M16 70l10 2 6 9-13 3z" fill="#6e5138"/><path d="M59 62q17 14 33 0v22q-17 12-32 0z" fill="#87765e"/><circle cx="76" cy="58" r="15" fill="#ddd"/><circle cx="76" cy="58" r="12.500" fill="#4a4440"/><path d="M65 55q11-12 22 0l-6 5-8-2z" fill="#a4b4bf"/></svg>
    <svg class="ico" viewBox="0 0 100 116"><circle cx="50" cy="50" r="42" fill="url(#gKey)"/><path d="M32 66q-10-2-10-13 1-9 10-10 0-14 17-15 14 0 17 11 12 2 12 14 0 11-10 13" fill="none" stroke="#fff" stroke-width="3.800"/><circle cx="42" cy="63" r="8.500" fill="#fff"/><circle cx="39" cy="63" r="2.300" fill="#178ce4"/><path d="M48 60h18v6l-3 1-2-3-3 3-2-3-2 2h-6z" fill="#fff"/><circle class="dot" cx="50" cy="108" r="4"/></svg>
    <i class="sep"></i>
    <svg class="ico" viewBox="0 0 100 116"><path d="M14 27q0-3 3-3h19q3 0 4 3l2 3h46q3 0 3 3v20H14z" fill="#8bdaf8"/><path d="M14 34h77v48q0 3-3 3H17q-3 0-3-3z" fill="#6cc9f3"/><path d="M14 78h77M14 81h77" stroke="#4eacd8"/></svg>
    <svg class="ico" viewBox="0 0 100 116"><use href="#mailwin" x="6" y="25" width="88" height="68"/></svg>
    <svg class="ico" viewBox="0 0 100 116"><use href="#mailwin" x="6" y="25" width="88" height="68"/></svg>
    <svg class="ico" viewBox="0 0 100 116"><path d="M7 18h86v63H7z" fill="#fff"/><path d="M7 18h86v5H7z" fill="#ccc"/><path d="M7 23h8v58H7z" fill="#d9dcdf"/><g fill="none" stroke="#c9cccf" stroke-width="5" stroke-dasharray="4 6.800"><path d="M20 28h70M20 36h70M20 44h70M20 52h70M20 60h70M20 68h44M20 76h44"/></g><g stroke="#fff" stroke-width="1"><path d="M16 27h76M16 35h76M16 43h76M16 51h76M16 59h76"/></g><path d="M17 28h8v2h-8z" fill="#2469d8"/><path d="M76 49h5v4h-5z" fill="#222"/><use href="#finder" x="63" y="64" width="29" height="26"/></svg>
    <svg class="ico" viewBox="0 0 100 116"><path d="M18 16l64 0-7 70q-1 6-25 6t-25-6z" fill="url(#gTrash)"/><ellipse cx="50" cy="18" rx="33" ry="8" fill="#aeb2b6"/><path d="M24 19l4-9 8 3 4-5 9 5 5-6 7 6 8-2 6 9-9 7-16-2-13 3z" fill="#f1f1f0"/><path d="M29 15l5 6 2-7zM56 12l7 9 5-6-5-2z" fill="#3a3d42"/><path d="M38 16l7 1-2 6-6-2z" fill="#3cc38f"/><path d="M45 19h5v5h-5z" fill="#f0642c"/><path d="M61 20l6-2 1 6-7 1z" fill="#2456a5"/><path d="M30 30l5 56M68 30l-5 56" stroke="#fff" stroke-opacity=".4" stroke-width="4"/><path d="M17 18q33 16 66 0" fill="none" stroke="#eee" stroke-width="2"/></svg>
  </footer>
</main>
</body>
</html>
```

FILE: styles.css
```css
* { box-sizing: border-box; margin: 0; padding: 0; }
body { width: 3360px; height: 2100px; overflow: hidden; display: flex; flex-direction: column; font-family: "Open Sans", sans-serif; color: #333; background: #0a1726; }
svg { display: block; flex: none; }
.defs { position: absolute; width: 0; height: 0; }
button { border: 0; font: inherit; display: flex; align-items: center; justify-content: center; }

.menubar { height: 46px; flex: none; display: flex; align-items: center; padding: 1px 46px 0 42px; background: linear-gradient(90deg, #c9dbeb, #d0e1ee 30%, #d8e6ee 50%, #cfe0ed 75%, #c5d8ea); border-bottom: 2px solid #41597a; color: #14293c; font: 27px/43px Inter, sans-serif; white-space: nowrap; }
.apple { fill: #14293c; margin-right: 41px; margin-top: -5px; }
.menus { display: flex; gap: 38px; }
.menus .app { font-weight: 700; letter-spacing: .2px; }
.status { margin-left: auto; display: flex; align-items: center; }
.wifi { margin-right: 21px; }
.percent { width: 50px; font-size: 23px; margin-right: 10px; }
.battery { margin-right: 36px; }
.clock { width: 118px; margin-right: 34px; letter-spacing: -.2px; }
.kbd { margin-right: 43px; }
.find { margin-right: 33px; }
.siri { margin-right: 24px; }

.desktop { position: relative; flex: 1; background: linear-gradient(90deg, #07111e, #0d1d2e 50%, #0a1a2b); }
.editor { position: absolute; left: 3324px; top: 2px; width: 36px; height: 1910px; overflow: hidden; border-radius: 0 12px 12px 0; background: linear-gradient(90deg, #2a2c38, #323445); }
.pips { font: 700 20px Roboto, sans-serif; }
.backwin { position: absolute; left: 0; top: 1860px; width: 3324px; height: 60px; border-radius: 0 0 12px 12px; background: linear-gradient(90deg, #f8f8f8, #e8e8e8 5%, #e8e8e8 95%, #f6f6f6); padding-top: 24px; }
.band { height: 20px; background: #b7bcc6; }

.safari { position: absolute; left: 0; top: 0; width: 3324px; height: 1884px; background: #fff; border-radius: 10px 10px 0 0; overflow: hidden; display: flex; flex-direction: column; }
.toolbar { height: 75px; flex: none; display: flex; align-items: center; padding: 0 16px 2px 26px; background: linear-gradient(#e9e9e9, #d4d4d4); border-top: 2px solid #f6f6f6; }
.lights { display: flex; gap: 16px; margin-right: 26px; }
.lights i { width: 24px; height: 24px; border-radius: 50%; }
.red { background: #fc5b57; border: 1px solid #e2463f; }
.amber { background: #fdbc40; border: 1px solid #dfa023; }
.green { background: #34c84a; border: 1px solid #27aa35; }
.toolbar button { height: 46px; background: linear-gradient(#fdfdfd, #f3f3f3); border-radius: 7px; box-shadow: 0 0 0 1px #c8c8c8, 0 2px 1px #aaa; }
.navbtns { display: flex; gap: 2px; margin-right: 19px; }
.navbtns button { width: 50px; }
.side { width: 76px; margin-right: 634px; }
.address { width: 1349px; height: 46px; display: flex; align-items: center; padding-right: 12px; background: linear-gradient(#fcfcfc, #f2f2f2); border-radius: 7px; box-shadow: 0 0 0 1px #c4c4c4, 0 2px 1px #a4a4a4; }
.host { flex: 1; display: flex; justify-content: center; gap: 9px; align-items: center; font: 24px/30px Inter, sans-serif; letter-spacing: -.3px; color: #4a4a4a; padding: 3px 0 0 36px; }
.actions { margin-left: auto; display: flex; gap: 15px; }
.actions button { width: 75px; }

.tabs { height: 51px; flex: none; display: flex; border-top: 2px solid #a9a9a9; border-bottom: 2px solid #a0a0a0; font: 22px/47px Inter, sans-serif; letter-spacing: .04px; color: #464646; background: linear-gradient(#c0c0c0, #b4b4b4); white-space: nowrap; }
.tab { display: flex; justify-content: center; border-right: 2px solid #a2a2a2; }
.t1 { width: 832px; }
.active { width: 829px; background: linear-gradient(#d6d6d6, #cdcdcd); color: #1f1f1f; }
.t3 { width: 809px; }
.t4 { width: 807px; }
.plus { flex: 1; align-items: center; border: 0; padding-right: 3px; }

.masthead { height: 94px; flex: none; display: flex; align-items: flex-start; border-bottom: 2px solid #e1e1e1; padding-left: 44px; white-space: nowrap; }
.logo { font: 900 66px Lato, sans-serif; fill: #2a73cc; margin-right: 48px; overflow: visible; }
.logo text { stroke: #2a73cc; stroke-width: 2.800px; }
.explore { width: 184px; height: 66px; background: #2a73cc; border-radius: 0 0 4px 4px; color: #fff; font-weight: 700; font-size: 27.500px; line-height: 60px; display: flex; align-items: center; gap: 15px; padding-left: 31px; padding-bottom: 6px; margin-right: 80px; }
.search { width: 900px; height: 69px; border: 2px solid #e1e1e1; border-top: 0; border-radius: 0 0 0 4px; font-size: 30px; letter-spacing: .24px; line-height: 55px; color: #757575; padding-left: 20px; }
.go { width: 80px; height: 69px; background: #2a73cc; padding: 13px 0 0 19px; }
.bell { margin: 10px 52px 0 1139px; }
.rule { width: 2px; height: 69px; background: #e1e1e1; margin-right: 49px; }
.user { font-size: 28px; line-height: 56px; margin: 0 14px 0 12px; }
.caret { margin-top: 27px; }

.crumbs { height: 90px; flex: none; display: flex; align-items: center; border-bottom: 2px solid #e1e1e1; padding: 0 48px 0 64px; font: 24px/36px "Liberation Sans", sans-serif; white-space: nowrap; }
.crumbs a { color: #3d85c6; }
.crumbs .week { letter-spacing: -.4px; }
.crumbs .here { letter-spacing: .08px; }
.crumbs > svg { margin: 4px 16px 0 17px; }
.pager { margin-left: auto; display: flex; align-items: center; font: 27.500px/40px "Open Sans", sans-serif; color: #5a5a5a; padding-top: 4px; }
.pager i { width: 2px; height: 28px; background: #777; margin: 0 33px; }

.content { flex: 1; display: flex; }
.outline { width: 482px; border-right: 2px solid #c7c7c7; padding-top: 43px; color: #333; white-space: nowrap; }
.outline h2, .outline h3 { font-size: 28px; line-height: 40px; color: #1f1f1f; padding-left: 48px; }
.outline h2 { margin-bottom: 13px; }
.outline h3 { padding-top: 12px; }
.item { display: flex; gap: 25px; padding: 15px 0 14px 49px; min-height: 144px; }
.item > svg { margin-top: 4px; }
.item p { font-size: 24px; line-height: 36px; }
.item small { display: block; font-size: 24px; line-height: 36px; margin-top: 4px; color: #757575; }
.item.current { background: #f7f7f7; border-left: 12px solid #2a73cc; padding-left: 37px; min-height: 180px; }
.rail { width: 76px; background: #f6f6f6; padding-top: 20px; box-shadow: 3px 3px 8px rgba(0, 0, 0, .38); clip-path: inset(0 -12px 0 0); }
.railbtn { height: 76px; background: #fff; border-radius: 4px; padding: 17px 0 0 18px; }

.quiz { width: 2224px; padding: 123px 0 0 304px; white-space: nowrap; }
.kicker { font-weight: 700; font-size: 24px; line-height: 36px; }
.quiz h1 { font-size: 68px; line-height: 96px; margin-top: 35px; height: 98px; color: #2f2f31; }
.step { display: flex; gap: 25px; margin-left: -71px; }
.stepbody { width: 1920px; border-bottom: 2px solid #e1e1e1; display: flex; justify-content: space-between; }
.step strong { font: 700 28px/36px "Liberation Sans", sans-serif; letter-spacing: -.1px; display: block; }
.s1 { margin-top: 212px; height: 130px; }
.s1 > svg { margin-top: 19px; }
.s1 strong { padding-top: 27px; }
.again { font: 700 26px/36px "Liberation Sans", sans-serif; letter-spacing: -.2px; color: #2a73cc; padding: 47px 34px 0 0; }
.s2 { height: 252px; }
.s2 > svg { margin-top: 45px; }
.lead { padding-top: 53px; }
.lead strong { letter-spacing: 0; }
.lead p { font-size: 24px; line-height: 36px; margin-top: 18px; display: flex; gap: 16px; color: #525252; }
.grade { display: flex; height: 180px; margin-top: 34px; border-left: 2px solid #e1e1e1; padding: 19px 6px 0 44px; justify-content: space-between; width: 512px; }
.score em { display: block; font: normal 40px/48px "Liberation Sans", sans-serif; letter-spacing: .3px; color: #237f52; margin-top: 14px; }
.feedback { display: flex; flex-direction: column; align-items: flex-end; padding-top: 5px; width: 309px; }
.feedback button { width: 256px; height: 72px; background: #2a73cc; color: #fff; border-radius: 4px; font: 700 26px/36px "Liberation Sans", sans-serif; letter-spacing: .1px; padding-top: 1px; }
.feedback span { font-size: 24px; line-height: 36px; margin-top: 17px; }
.react { display: flex; justify-content: flex-end; gap: 35px; padding: 54px 11px 0 0; }
.fade { position: absolute; left: 0; right: 0; bottom: 0; height: 50px; background: linear-gradient(transparent, rgba(0, 0, 0, .025)); }
.edge { position: absolute; left: 0; top: 1884px; width: 2845px; height: 14px; background: linear-gradient(rgba(0, 0, 0, .38), rgba(0, 0, 0, .1) 50%, transparent); }

.dock { position: absolute; left: 80px; bottom: 0; width: 3199px; height: 124px; padding: 8px 8px 0; display: flex; border-radius: 12px 12px 0 0; background: linear-gradient(90deg, #4c5a6f, #52677f 30%, #546b82 60%, #4b5c74); }
.ico { width: 99.860px; height: 116px; }
.dot { fill: #000; }
.sep { width: 44px; height: 92px; margin-top: 8px; background: linear-gradient(#1b2c48, #1b2c48) 21px 0 / 2px 100% no-repeat; flex: none; }
.bdg { font: 21px Inter, sans-serif; fill: #fff; text-anchor: middle; }
.t3d { font: 14px Roboto, sans-serif; fill: #222; text-anchor: middle; }
.jun { font: 17px Roboto, sans-serif; fill: #fff; text-anchor: middle; }
.eight { font: 44px Inter, sans-serif; fill: #222; text-anchor: middle; }
.pg { font: 10.500px Roboto, sans-serif; fill: #fff; }
.tv { font: 600 28px Inter, sans-serif; fill: #fff; }
.hand { font: italic 10px Lato, sans-serif; fill: #444; }
.hand .r { fill: #e02a1a; font-weight: 700; }
```
